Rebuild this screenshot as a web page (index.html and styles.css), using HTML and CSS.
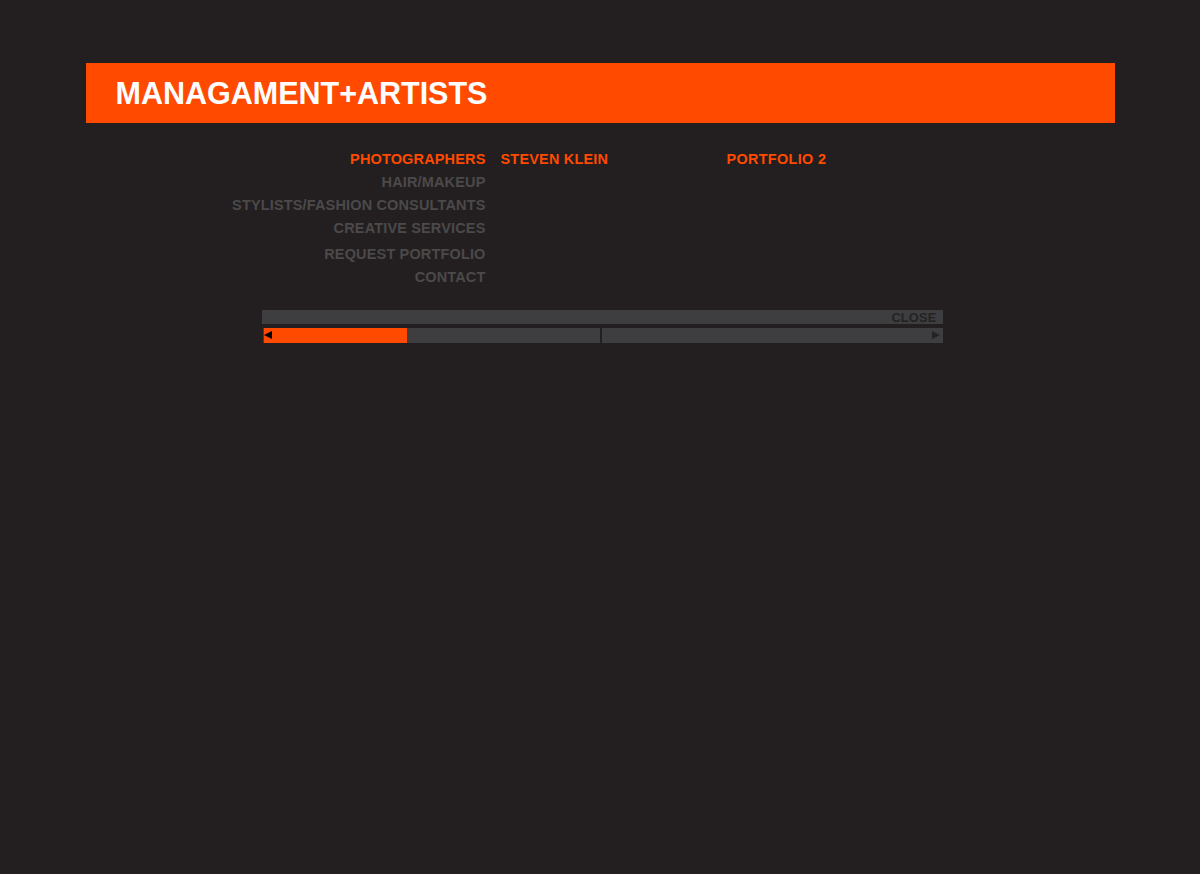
FILE: index.html
```html
<!DOCTYPE html>
<html lang="en">
<head>
  <meta charset="UTF-8" />
  <title>Managament+Artists</title>
  <link rel="stylesheet" href="styles.css">
</head>
<body>
  <div class="page">
    <div class="header">
      <h1>MANAGAMENT+ARTISTS</h1>
    </div>

    <div class="menu">
      <ul class="nav">
        <li class="active">PHOTOGRAPHERS</li>
        <li>HAIR/MAKEUP</li>
        <li>STYLISTS/FASHION CONSULTANTS</li>
        <li>CREATIVE SERVICES</li>
        <li class="spaced">REQUEST PORTFOLIO</li>
        <li>CONTACT</li>
      </ul>
      <div class="artist">STEVEN KLEIN</div>
      <div class="portfolio">PORTFOLIO 2</div>
    </div>

    <div class="player">
      <div class="player-top">
        <span class="close">CLOSE</span>
      </div>
      <div class="track">
        <div class="seg seg-left">
          <div class="fill" style="width: 143px"></div>
          <span class="arrow arrow-left"></span>
        </div>
        <div class="divider"></div>
        <div class="seg seg-right">
          <span class="arrow arrow-right"></span>
        </div>
      </div>
    </div>
  </div>
</body>
</html>
```

FILE: styles.css
```css
:root {
  --bg: #231f20;
  --orange: #ff4a00;
  --muted: #4b494a;
  --bar: #3e3d3f;
  --dark: #252223;
}

* {
  box-sizing: border-box;
}

body {
  margin: 0;
  background-color: var(--bg);
  font-family: 'Liberation Sans', Arial, sans-serif;
  font-weight: bold;
}

.page {
  width: 1029px;
  margin: 63px auto 0;
}

.header {
  height: 60px;
  background-color: var(--orange);
  display: flex;
  align-items: center;
  padding-left: 30px;
}

.header h1 {
  margin: 0;
  color: #fff;
  font-size: 30.5px;
  font-weight: bold;
}

.menu {
  display: flex;
  margin-top: 25px;
  font-size: 14.5px;
  line-height: 23px;
}

.nav {
  list-style: none;
  margin: 0;
  padding: 0;
  width: 400px;
  text-align: right;
  color: var(--muted);
  letter-spacing: 0.15px;
}

.nav .active {
  color: var(--orange);
}

.nav .spaced {
  margin-top: 3px;
}

.artist {
  color: var(--orange);
  margin-left: 15px;
  width: 226px;
  font-size: 14.4px;
  line-height: 22px;
  letter-spacing: 0.25px;
}

.portfolio {
  color: var(--orange);
  font-size: 14.4px;
  line-height: 22px;
  letter-spacing: 0.35px;
}

.player {
  width: 681px;
  margin: 21px 0 0 176px;
}

.player-top {
  height: 14px;
  background-color: var(--bar);
  display: flex;
  justify-content: flex-end;
  align-items: center;
  padding-right: 6px;
}

.close {
  color: var(--dark);
  font-size: 12.8px;
  line-height: 14px;
  margin-top: 2px;
  letter-spacing: 0.2px;
}

.track {
  display: flex;
  height: 15px;
  margin-top: 4px;
  margin-left: 1px;
}

.seg {
  position: relative;
  background-color: var(--bar);
}

.seg-left {
  width: 337px;
}

.seg-right {
  flex: 1;
}

.divider {
  width: 2px;
  background-color: var(--bg);
}

.fill {
  height: 100%;
  margin-left: 1px;
  background-color: var(--orange);
}

.arrow {
  position: absolute;
  top: 3px;
  width: 0;
  height: 0;
  border-top: 4.5px solid transparent;
  border-bottom: 4.5px solid transparent;
}

.arrow-left {
  left: 1px;
  border-right: 8px solid #000;
}

.arrow-right {
  right: 3px;
  border-left: 8px solid var(--dark);
}
```
